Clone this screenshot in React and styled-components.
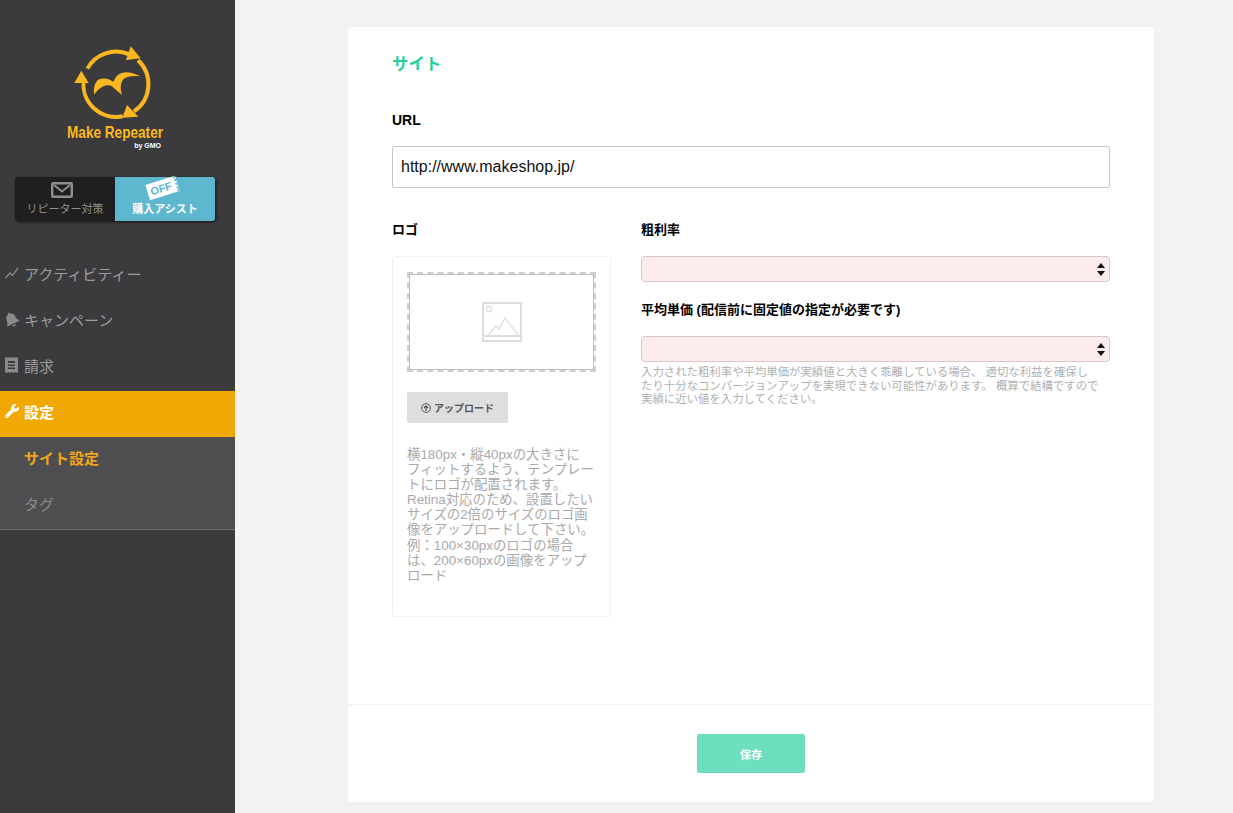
import React from 'react';
import styled, { createGlobalStyle } from 'styled-components';
import { FaBell, FaWrench } from 'react-icons/fa';

const FONT = '"Liberation Sans", "Noto Sans CJK JP", sans-serif';

const GlobalStyle = createGlobalStyle`
  html, body {
    margin: 0;
    padding: 0;
    background: #f3f2f0;
    font-family: ${FONT};
  }
  * { box-sizing: border-box; }
`;

const Page = styled.div`
  display: flex;
  min-height: 100vh;
`;

const Sidebar = styled.aside`
  width: 235px;
  flex: none;
  background: #3b3b3d;
`;

const Brand = styled.div`
  width: 230px;
  height: 177px;
  padding-top: 42px;
  display: flex;
  flex-direction: column;
  align-items: center;
`;

const LogoName = styled.div`
  color: #fbb71f;
  font-size: 17px;
  line-height: 18px;
  font-weight: bold;
  white-space: nowrap;
  transform: scaleX(0.8);
`;

const LogoBy = styled.div`
  align-self: flex-end;
  margin: 0 69px 0 0;
  color: #fff;
  font-size: 7px;
  line-height: 8px;
  font-weight: bold;
  white-space: nowrap;
`;

const Tabs = styled.div`
  display: flex;
  width: 200px;
  height: 44px;
  margin-left: 15px;
  border-radius: 3px;
  box-shadow: 1px 1px 3px rgba(0, 0, 0, 0.7);
`;

const Tab = styled.div`
  width: 100px;
  display: flex;
  flex-direction: column;
  align-items: center;
  padding-top: 5px;
  border-radius: ${({ $active }) => ($active ? '0 3px 3px 0' : '3px 0 0 3px')};
  background: ${({ $active }) => ($active ? '#5cb7cf' : '#1f1f20')};
  color: ${({ $active }) => ($active ? '#fff' : '#8f8f8f')};
  font-size: 11px;
  line-height: 14px;
  font-weight: ${({ $active }) => ($active ? 'bold' : 'normal')};
`;

const TabIcon = styled.div`
  height: 20px;
  margin-right: ${({ $shift }) => $shift || 0}px;
  display: flex;
  align-items: flex-start;
  justify-content: center;
`;

const Ticket = styled.span`
  display: block;
  width: 31px;
  height: 16px;
  padding-left: 3px;
  background: #fff;
  border-right: 2px dotted #5cb7cf;
  color: #5cb7cf;
  font-size: 11px;
  line-height: 16px;
  font-weight: bold;
  transform: translate(-3px, -2px) rotate(-17deg);
`;

const Nav = styled.nav`
  margin-top: 32px;
  border-bottom: 1px solid #6d6d6e;
`;

const NavRow = styled.div`
  height: 46px;
  display: flex;
  align-items: center;
  gap: 5px;
  padding: 0 0 6px 4px;
  font-size: 15px;
  color: ${({ $active }) => ($active ? '#fff' : '#9b9b9b')};
  font-weight: ${({ $active }) => ($active ? 'bold' : 'normal')};
  background: ${({ $active }) => ($active ? '#f0a904' : 'transparent')};
`;

const NavIcon = styled.span`
  width: 15px;
  height: 15px;
  display: flex;
  align-items: center;
  justify-content: center;
  color: ${({ $active }) => ($active ? '#fff' : '#8a8a8a')};
`;

const SubRow = styled.div`
  height: 46px;
  display: flex;
  align-items: center;
  padding: 0 0 6px 24px;
  background: #4e4e50;
  font-size: 15px;
  color: ${({ $active }) => ($active ? '#f2a61c' : '#8b8b8b')};
  font-weight: ${({ $active }) => ($active ? 'bold' : 'normal')};
`;

const Main = styled.main`
  flex: 1;
  padding: 27px 0 11px 113px;
`;

const Card = styled.section`
  width: 806px;
  background: #fff;
  border-radius: 3px;
`;

const CardBody = styled.div`
  height: 678px;
  padding: 28px 44px 0;
  border-bottom: 1px solid #f2f2f2;
`;

const Title = styled.h2`
  margin: 0 0 36px;
  color: #25d09a;
  font-size: 16.5px;
  line-height: 18px;
  padding-bottom: 2px;
  font-weight: bold;
`;

const Label = styled.label`
  display: block;
  margin-bottom: 17px;
  color: #000;
  font-size: ${({ $size }) => $size || 13}px;
  line-height: 18px;
  font-weight: bold;
`;

const TextInput = styled.input`
  display: block;
  width: 100%;
  height: 42px;
  padding: 0 8px;
  border: 1px solid #c8c8c8;
  border-radius: 2px;
  background: #fff;
  color: #111;
  font-family: ${FONT};
  font-size: 16px;
  outline: none;
`;

const Columns = styled.div`
  display: grid;
  grid-template-columns: 219px 469px;
  column-gap: 30px;
  margin-top: 33px;
`;

const LogoBox = styled.div`
  height: 361px;
  padding: 15px 14px 0;
  border: 1px solid #f0f0f0;
  border-radius: 3px;
`;

const Dropzone = styled.div`
  height: 100px;
  border: 2px dashed #cfcfcf;
  display: flex;
`;

const DropzoneInner = styled.div`
  flex: 1;
  border: 1px solid #bdbdbd;
  display: flex;
  align-items: center;
  justify-content: center;
`;

const UploadButton = styled.button`
  display: flex;
  align-items: center;
  gap: 3px;
  width: 101px;
  height: 31px;
  margin-top: 20px;
  padding: 0 0 0 14px;
  border: 0;
  border-radius: 2px;
  background: #dedede;
  color: #555;
  font-family: ${FONT};
  font-size: 10px;
  font-weight: bold;
`;

const HelpText = styled.p`
  margin: 24px 0 0;
  color: #a9a9a9;
  font-size: 13.4px;
  line-height: 15.1px;
  white-space: nowrap;
`;

const SelectWrap = styled.div`
  position: relative;
  height: 26px;
  margin-bottom: ${({ $tight }) => ($tight ? '4px' : '19px')};
`;

const Select = styled.select`
  appearance: none;
  display: block;
  width: 100%;
  height: 26px;
  border: 1px solid #d8c8c8;
  border-radius: 4px;
  background: #fdecec;
  outline: none;
`;

const SelectArrows = styled.svg`
  position: absolute;
  top: 7px;
  right: 5px;
  pointer-events: none;
`;

const Hint = styled.p`
  margin: 0;
  color: #b0b0b0;
  font-size: 11.4px;
  line-height: 13.6px;
  white-space: nowrap;
`;

const CardFooter = styled.div`
  height: 97px;
  display: flex;
  justify-content: center;
  padding-top: 29px;
`;

const SaveButton = styled.button`
  width: 108px;
  height: 39px;
  border: 0;
  border-radius: 2px;
  background: #6ddfbe;
  color: #fff;
  font-family: ${FONT};
  font-size: 11px;
  font-weight: bold;
`;

const Logo = () => (
  <svg width="90" height="82" viewBox="0 0 270 246" fill="none">
    <g stroke="#fbb71f" strokeWidth="12">
      <path d="M158 223 A98 98 0 0 1 41 115" />
      <path d="M52 80 A98 98 0 0 1 178 37" />
      <path d="M204 55 A98 98 0 0 1 192 208" />
    </g>
    <g fill="#fbb71f">
      <path d="M34 86 L56 123 L13 123 Z" />
      <path d="M212 49 L168 54 L182 13 Z" />
      <path d="M157 227 L171 189 L205 224 Z" />
      <path d="M72 158 C70 135 76 116 90 111 C105 106 122 112 130 120 C138 98 160 76 211 103 C190 100 172 102 160 112 C151 124 150 140 156 158 C145 152 135 140 125 132 C112 126 92 130 72 158 Z" />
    </g>
  </svg>
);

const MailIcon = () => (
  <svg width="22" height="16" viewBox="0 0 22 16" fill="none" stroke="#8f8f8f" strokeWidth="2.4">
    <rect x="1.2" y="1.2" width="19.6" height="13.6" rx="1" />
    <path d="M3 3 L11 9.5 L19 3" strokeWidth="2" />
  </svg>
);

const ChartIcon = () => (
  <svg width="14" height="14" viewBox="0 0 14 14" fill="none" stroke="#8a8a8a" strokeWidth="1.3">
    <path d="M0.5 12 L5 7 L7.5 9.5 L13 2" />
  </svg>
);

const ReceiptIcon = () => (
  <svg width="13" height="16" viewBox="0 0 13 16">
    <path
      fill="#8a8a8a"
      fillRule="evenodd"
      d="M0 1 L1.6 0 L3.2 1 L4.9 0 L6.5 1 L8.1 0 L9.8 1 L11.4 0 L13 1 V15 L11.4 16 L9.8 15 L8.1 16 L6.5 15 L4.9 16 L3.2 15 L1.6 16 L0 15 Z M3 4 V6 H10 V4 Z M3 7.5 V9 H10 V7.5 Z M3 10.5 V12 H10 V10.5 Z"
    />
  </svg>
);

const ImageIcon = () => (
  <svg width="40" height="40" viewBox="0 0 40 40" fill="none" stroke="#dcdcdc" strokeWidth="2">
    <rect x="1" y="1" width="38" height="38" />
    <path d="M1 34 H39" />
    <circle cx="7" cy="7" r="2.7" strokeWidth="1.2" />
    <path d="M5.5 34 L14 24 L17 27 L23 16 L37 34" strokeWidth="1.2" />
  </svg>
);

const UploadIcon = () => (
  <svg width="10" height="10" viewBox="0 0 10 10" fill="none" stroke="#555" strokeWidth="1">
    <circle cx="5" cy="5" r="4.4" />
    <path d="M5 8 V3 M3 5 L5 2.8 L7 5" strokeWidth="1.2" />
  </svg>
);

const Arrows = () => (
  <SelectArrows width="8" height="13" viewBox="0 0 8 13" fill="#111">
    <path d="M4 0 L8 5 H0 Z M4 13 L0 8 H8 Z" />
  </SelectArrows>
);

export default function App() {
  return (
    <Page>
      <GlobalStyle />
      <Sidebar>
        <Brand>
          <Logo />
          <LogoName>Make Repeater</LogoName>
          <LogoBy>by GMO</LogoBy>
        </Brand>
        <Tabs>
          <Tab>
            <TabIcon $shift={6}><MailIcon /></TabIcon>
            リピーター対策
          </Tab>
          <Tab $active>
            <TabIcon><Ticket>OFF</Ticket></TabIcon>
            購入アシスト
          </Tab>
        </Tabs>
        <Nav>
          <NavRow>
            <NavIcon><ChartIcon /></NavIcon>
            アクティビティー
          </NavRow>
          <NavRow>
            <NavIcon><FaBell size={15} style={{ transform: 'rotate(-25deg)' }} /></NavIcon>
            キャンペーン
          </NavRow>
          <NavRow>
            <NavIcon><ReceiptIcon /></NavIcon>
            請求
          </NavRow>
          <NavRow $active>
            <NavIcon $active><FaWrench size={14} /></NavIcon>
            設定
          </NavRow>
          <SubRow $active>サイト設定</SubRow>
          <SubRow>タグ</SubRow>
        </Nav>
      </Sidebar>
      <Main>
        <Card>
          <CardBody>
            <Title>サイト</Title>
            <Label $size={14}>URL</Label>
            <TextInput defaultValue="http://www.makeshop.jp/" />
            <Columns>
              <div>
                <Label>ロゴ</Label>
                <LogoBox>
                  <Dropzone>
                    <DropzoneInner><ImageIcon /></DropzoneInner>
                  </Dropzone>
                  <UploadButton><UploadIcon />アップロード</UploadButton>
                  <HelpText>
                    横180px・縦40pxの大きさに<br />
                    フィットするよう、テンプレー<br />
                    トにロゴが配置されます。<br />
                    Retina対応のため、設置したい<br />
                    サイズの2倍のサイズのロゴ画<br />
                    像をアップロードして下さい。<br />
                    例：100×30pxのロゴの場合<br />
                    は、200×60pxの画像をアップ<br />
                    ロード
                  </HelpText>
                </LogoBox>
              </div>
              <div>
                <Label>粗利率</Label>
                <SelectWrap>
                  <Select />
                  <Arrows />
                </SelectWrap>
                <Label>平均単価 (配信前に固定値の指定が必要です)</Label>
                <SelectWrap $tight>
                  <Select />
                  <Arrows />
                </SelectWrap>
                <Hint>
                  入力された粗利率や平均単価が実績値と大きく乖離している場合、 適切な利益を確保し<br />
                  たり十分なコンバージョンアップを実現できない可能性があります。 概算で結構ですので<br />
                  実績に近い値を入力してください。
                </Hint>
              </div>
            </Columns>
          </CardBody>
          <CardFooter>
            <SaveButton>保存</SaveButton>
          </CardFooter>
        </Card>
      </Main>
    </Page>
  );
}
